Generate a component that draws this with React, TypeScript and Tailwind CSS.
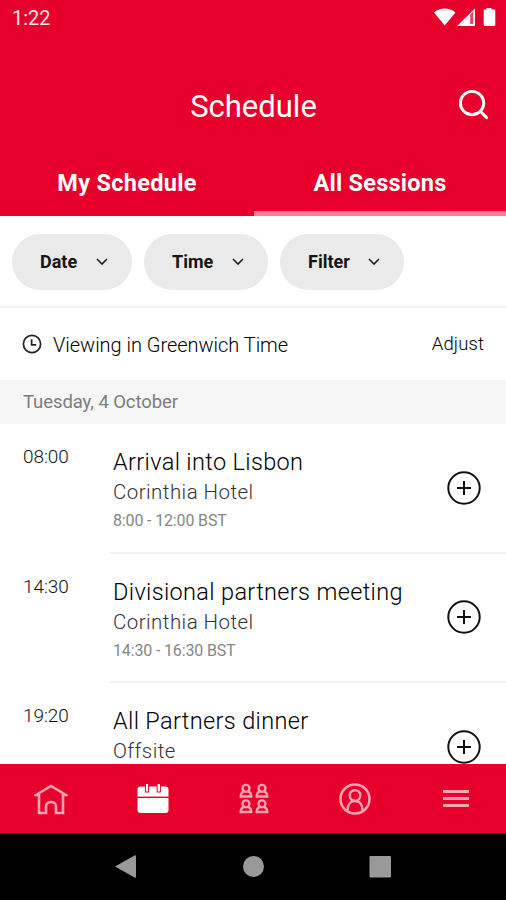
import { Search } from 'lucide-react';
import type { ReactNode } from 'react';

const filters = [
  { label: 'Date', width: 'w-[120px]' },
  { label: 'Time', width: 'w-[124px]' },
  { label: 'Filter', width: 'w-[124px]' }
];

const sessions = [
  { start: '08:00', title: 'Arrival into Lisbon', place: 'Corinthia Hotel', time: '8:00 - 12:00 BST' },
  { start: '14:30', title: 'Divisional partners meeting', place: 'Corinthia Hotel', time: '14:30 - 16:30 BST' },
  { start: '19:20', title: 'All Partners dinner', place: 'Offsite', time: '' }
];

function StatusBar() {
  return (
    <div className="flex h-9 items-center justify-between pr-[10px] pl-3">
      <span className="text-[20px] text-white/90">1:22</span>
      <svg width="62" height="20" viewBox="0 0 62 20" fill="#fff">
        <path d="M0 4.4C6 -0.7 15.500 -0.7 21.500 4.400L10.700 17.500Z" />
        <path d="M23 18 41 0.500V18Z" />
        <path d="M36.200 6.500 39.200 3.500V16H36.200Z" fill="#e6002b" opacity="0.75" />
        <path d="M52.500 0H57.500V1.600H60Q61.300 1.600 61.300 3V16.700Q61.300 18 60 18H51Q49.700 18 49.700 16.700V3Q49.700 1.600 51 1.600H52.500Z" />
      </svg>
    </div>
  );
}

function ClockIcon() {
  return (
    <svg width="20" height="20" viewBox="0 0 20 20" fill="none" stroke="#222" strokeWidth="1.7">
      <circle cx="10" cy="10" r="8.600" />
      <path d="M9.600 5.300V10.800H14.200" />
    </svg>
  );
}

function AddButton() {
  return (
    <button type="button" aria-label="Add session">
      <svg width="34" height="34" viewBox="0 0 34 34" fill="none" stroke="#111" strokeWidth="2">
        <circle cx="17" cy="17" r="15.700" />
        <path d="M17 10V24M10 17H24" />
      </svg>
    </button>
  );
}

function SmallPerson({ x, y }: { x: number; y: number }) {
  return (
    <g transform={`translate(${x} ${y})`}>
      <circle cx="6.500" cy="4.800" r="3.500" />
      <path d="M4.300 7.800C2 8.600 1.200 10.500 1.200 13H11.800C11.800 10.500 11 8.600 8.700 7.800" />
    </g>
  );
}

function NavItem({ label, children }: { label: string; children: ReactNode }) {
  return (
    <button type="button" aria-label={label} className="flex flex-1 items-center justify-center">
      {children}
    </button>
  );
}

function BottomNav() {
  return (
    <nav className="flex h-[69px] shrink-0 bg-[#e6002b] pl-px">
      <NavItem label="Home">
        <svg width="34" height="32" viewBox="0 0 34 32" fill="none" stroke="#ffa3b4" strokeWidth="2.600" className="mr-0.5">
          <path d="M2 12 17 3 32 12H29V30H22V23.500C22 17.500 12 17.500 12 23.500V30H5V12Z" />
        </svg>
      </NavItem>
      <NavItem label="Schedule">
        <svg width="32" height="32" viewBox="0 0 32 32">
          <rect x="0.500" y="3.500" width="31" height="26.500" rx="3" fill="#fff" />
          <path d="M0 14.300H32" stroke="#e6002b" strokeWidth="1.400" />
          <path d="M10 0V9.500M21.800 0V9.500" stroke="#e6002b" strokeWidth="4.200" />
          <path d="M10 1V8.500M21.800 1V8.500" stroke="#fff" strokeWidth="2.200" />
        </svg>
      </NavItem>
      <NavItem label="People">
        <svg width="30" height="32" viewBox="0 0 30 32" fill="none" stroke="#ffa3b4" strokeWidth="2.300">
          <SmallPerson x={0.5} y={0.5} />
          <SmallPerson x={16.5} y={0.5} />
          <SmallPerson x={0.5} y={16} />
          <SmallPerson x={16.5} y={16} />
        </svg>
      </NavItem>
      <NavItem label="Profile">
        <svg width="32" height="32" viewBox="0 0 32 32" fill="none" stroke="#ffa3b4" strokeWidth="2.500">
          <circle cx="16" cy="16" r="14.500" />
          <circle cx="16" cy="12.500" r="5.300" />
          <path d="M8.500 27.500C8.500 21.500 11.500 18 16 18C20.500 18 23.500 21.500 23.500 27.500" />
        </svg>
      </NavItem>
      <NavItem label="Menu">
        <svg width="26" height="20" viewBox="0 0 26 20" stroke="#ffa3b4" strokeWidth="3">
          <path d="M0 2.500H26M0 9.500H26M0 16.500H26" />
        </svg>
      </NavItem>
    </nav>
  );
}

export default function App() {
  return (
    <div className="flex h-[900px] w-[506px] flex-col overflow-hidden bg-white font-[Roboto,sans-serif]">
      <header className="flex h-[216px] shrink-0 flex-col bg-[#e6002b] text-white">
        <StatusBar />
        <div className="grid h-[114px] grid-cols-[60px_1fr_60px] items-center pt-[26px]">
          <h1 className="col-start-2 pt-0.5 pl-px text-center text-[31px]">Schedule</h1>
          <Search size={35} strokeWidth={2} className="-mt-[3px] -ml-[6px] justify-self-center" />
        </div>
        <div className="grid flex-1 grid-cols-[254px_252px] text-[23.5px] font-bold">
          <button type="button" className="pt-0.5 tracking-[0.3px]">My Schedule</button>
          <button type="button" className="border-b-[5px] border-[#ff7d96] pt-[7px] tracking-[0.25px]">
            All Sessions
          </button>
        </div>
      </header>

      <div className="flex h-[92px] shrink-0 items-start gap-3 border-b-2 border-[#f2f2f2] pt-[18px] pl-3">
        {filters.map(({ label, width }) => (
          <button
            key={label}
            type="button"
            className={`flex h-14 items-center justify-between rounded-full bg-[#eaeaea] pr-6 pb-px pl-7 text-[18px] font-bold text-[#161616] ${width}`}
          >
            {label}
            <svg width="12" height="10" viewBox="0 0 12 10" fill="none" stroke="#222" strokeWidth="1.600">
              <path d="M1 2 6 7 11 2" />
            </svg>
          </button>
        ))}
      </div>

      <div className="flex h-[72px] shrink-0 items-center px-[22px] text-[#000]">
        <ClockIcon />
        <span className="ml-[11px] flex-1 pt-[2px] text-[20px] font-light tracking-[-0.03px]">Viewing in Greenwich Time</span>
        <button type="button" className="pt-px text-[18.5px] font-light tracking-[0.1px]">Adjust</button>
      </div>

      <div className="flex h-11 shrink-0 items-center bg-[#f6f6f6] pt-px pl-[23px] text-[18.5px] tracking-[-0.08px] text-[#7c7c7c]">
        Tuesday, 4 October
      </div>

      <main className="min-h-0 flex-1 overflow-hidden">
        {sessions.map((session) => (
          <div key={session.start} className="flex h-[129.5px] pl-[23px]">
            <span className="w-[87px] pt-[19px] text-[19px] font-light tracking-[-0.1px] text-[#111]">{session.start}</span>
            <div className="flex flex-1 justify-between border-b-2 border-[#f0f0f0] pr-[25px] pl-[3px]">
              <div className="pt-[23px]">
                <h2 className="text-[23.5px] leading-[30px] font-light tracking-[0.35px] text-[#000]">{session.title}</h2>
                <p className="pt-px text-[20.5px] leading-[29px] font-light tracking-[0.45px] text-[#333]">{session.place}</p>
                <p className="text-[16px] leading-[27px] tracking-[-0.15px] text-[#858585]">{session.time}</p>
              </div>
              <div className="flex items-center">
                <AddButton />
              </div>
            </div>
          </div>
        ))}
      </main>

      <BottomNav />
      <div className="h-[67px] shrink-0 bg-black pt-[17px]">
        <svg width="506" height="32" viewBox="0 0 506 32" fill="#999">
          <path d="M115 16.500 134.500 5.500Q136 4.500 136 6.500V26.500Q136 28.500 134.500 27.500Z" />
          <circle cx="253.500" cy="16.500" r="10.500" />
          <rect x="369.500" y="6" width="21.500" height="21.500" rx="1.200" />
        </svg>
      </div>
    </div>
  );
}
